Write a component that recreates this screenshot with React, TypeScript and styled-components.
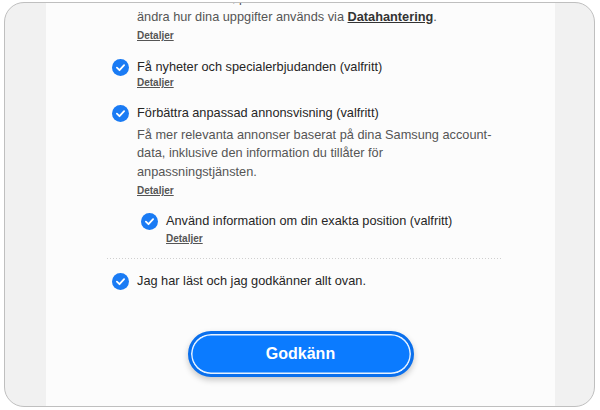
import styled, { createGlobalStyle } from 'styled-components'

const GlobalStyle = createGlobalStyle`
    body {
        margin: 0;
        background: #ffffff;
        font-family: "Liberation Sans", Arial, sans-serif;
    }
`

const Frame = styled.div`
    box-sizing: border-box;
    width: 591px;
    height: 405px;
    margin: 2px 0 0 4px;
    border: 1px solid #bfbfbf;
    border-radius: 20px;
    background: #f1f1f1;
    padding-left: 41px;
    overflow: hidden;
`

const Column = styled.main`
    width: 509px;
    height: 100%;
    background: #fcfcfc;
    display: flex;
    flex-direction: column;
`

const Content = styled.section`
    padding-left: 66px;
    display: flex;
    flex-direction: column;
`

// the list is scrolled, so the first line sits half above the top edge
const Intro = styled.div`
    margin-top: -14px;
    padding-left: 25px;
`

const Paragraph = styled.p`
    margin: 0;
    font-size: 12.75px;
    line-height: 18.5px;
    color: #555555;

    a {
        color: #333333;
        font-weight: 700;
        text-decoration: underline;
    }
`

const Item = styled.div<{ $gap: number; $indent?: boolean }>`
    display: flex;
    align-items: flex-start;
    gap: 8px;
    margin-top: ${p => p.$gap}px;
    padding-left: ${p => (p.$indent ? 29 : 0)}px;
`

const Body = styled.div`
    max-width: 362px;
    display: flex;
    flex-direction: column;
`

const Title = styled.div`
    font-size: 12.75px;
    line-height: 18.5px;
    color: #262626;
`

const Desc = styled.p`
    margin: 4px 0 0;
    font-size: 12.75px;
    line-height: 18.3px;
    color: #555555;
`

const Details = styled.a<{ $gap: number }>`
    display: block;
    width: fit-content;
    margin-top: ${p => p.$gap}px;
    font-size: 10px;
    line-height: 13px;
    font-weight: 700;
    color: #555555;
    text-decoration: underline;
    cursor: pointer;
`

const Divider = styled.div`
    height: 1px;
    margin: 13px 53px 0 -5px;
    background-image: linear-gradient(to right, #cfcfcf 50%, transparent 50%);
    background-size: 3px 1px;
`

const CheckIcon = styled.svg`
    flex: none;
    width: 17px;
    height: 17px;
    margin-top: 1px;
`

const Footer = styled.div`
    display: flex;
    justify-content: center;
    margin-top: 41px;
`

const AcceptButton = styled.button`
    box-sizing: border-box;
    width: 226px;
    height: 46px;
    border: 3px solid #0a6fec;
    border-radius: 23px;
    background: #0b7bff;
    box-shadow: inset 0 0 0 1.5px rgba(255, 255, 255, 0.9), 0 3px 6px rgba(0, 0, 0, 0.22);
    color: #ffffff;
    font-family: "Liberation Sans", Arial, sans-serif;
    font-size: 16px;
    font-weight: 700;
    cursor: pointer;
`

const Check = () => (
    <CheckIcon viewBox="0 0 17 17">
        <circle cx="8.5" cy="8.5" r="8.5" fill="#1a7bf4" />
        <path d="M4.9 8.7 L7.5 11.2 L12.1 6.2" fill="none" stroke="#ffffff" strokeWidth="1.8" strokeLinecap="round" strokeLinejoin="round" />
    </CheckIcon>
)

type Option = {
    title: string
    desc?: string
    gap: number
    detailsGap: number
    indent?: boolean
}

const options: Option[] = [
    { title: 'Få nyheter och specialerbjudanden (valfritt)', gap: 15.5, detailsGap: 0 },
    {
        title: 'Förbättra anpassad annonsvisning (valfritt)',
        desc: 'Få mer relevanta annonser baserat på dina Samsung account-data, inklusive den information du tillåter för anpassningstjänsten.',
        gap: 14.5,
        detailsGap: 3,
    },
    { title: 'Använd information om din exakta position (valfritt)', gap: 15, detailsGap: 1.2, indent: true },
]

export default function App() {
    return (
        <>
            <GlobalStyle />
            <Frame>
                <Column>
                    <Content>
                        <Intro>
                            <Paragraph>
                                Du kan visa dem, på ditt konto eller när som helst
                                <br />
                                ändra hur dina uppgifter används via <a>Datahantering</a>.
                            </Paragraph>
                            <Details $gap={3}>Detaljer</Details>
                        </Intro>

                        {options.map(o => (
                            <Item key={o.title} $gap={o.gap} $indent={o.indent}>
                                <Check />
                                <Body>
                                    <Title>{o.title}</Title>
                                    {o.desc && <Desc>{o.desc}</Desc>}
                                    <Details $gap={o.detailsGap}>Detaljer</Details>
                                </Body>
                            </Item>
                        ))}

                        <Divider />

                        <Item $gap={13}>
                            <Check />
                            <Body>
                                <Title>Jag har läst och jag godkänner allt ovan.</Title>
                            </Body>
                        </Item>
                    </Content>

                    <Footer>
                        <AcceptButton>Godkänn</AcceptButton>
                    </Footer>
                </Column>
            </Frame>
        </>
    )
}
